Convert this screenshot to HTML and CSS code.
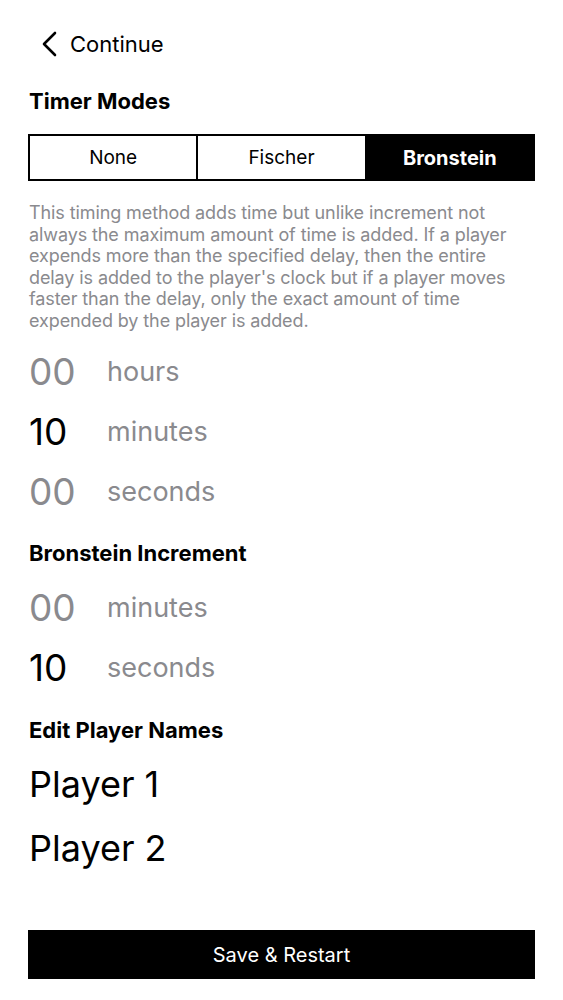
FILE: index.html
```html
<!DOCTYPE html>
<html>
<head>
<meta charset="utf-8">
<link rel="stylesheet" href="styles.css">
</head>
<body>
<div class="page">
  <div class="nav">
    <svg class="chev" width="18" height="26" viewBox="0 0 18 26"><path d="M14 2 L3 13 L14 24" fill="none" stroke="#000" stroke-width="2.6" stroke-linecap="round" stroke-linejoin="round"/></svg>
    <span class="nav-text">Continue</span>
  </div>
  <h2 class="section first">Timer Modes</h2>
  <div class="seg">
    <div class="seg-item">None</div>
    <div class="seg-item">Fischer</div>
    <div class="seg-item active">Bronstein</div>
  </div>
  <p class="desc">This timing method adds time but unlike increment not always the maximum amount of time is added. If a player expends more than the specified delay, then the entire delay is added to the player's clock but if a player moves faster than the delay, only the exact amount of time expended by the player is added.</p>
  <div class="rows r1">
    <div class="row"><span class="num">00</span><span class="unit">hours</span></div>
    <div class="row"><span class="num dark">10</span><span class="unit">minutes</span></div>
    <div class="row"><span class="num">00</span><span class="unit">seconds</span></div>
  </div>
  <h2 class="section">Bronstein Increment</h2>
  <div class="rows r2">
    <div class="row"><span class="num">00</span><span class="unit">minutes</span></div>
    <div class="row"><span class="num dark">10</span><span class="unit">seconds</span></div>
  </div>
  <h2 class="section">Edit Player Names</h2>
  <div class="players">
    <div class="player">Player 1</div>
    <div class="player">Player 2</div>
  </div>
  <div class="btn">Save &amp; Restart</div>
</div>
</body>
</html>
```
FILE: styles.css
```css
* { box-sizing: border-box; }
html, body { margin: 0; padding: 0; background: #fff; }
body { font-family: Inter, "Noto Sans", sans-serif; color: #000; }
.page { width: 563px; height: 1000px; padding: 0 28px; display: flex; flex-direction: column; }
.nav { display: flex; align-items: center; height: 30px; margin-top: 29px; margin-left: 13px; gap: 11px; }
.chev { display: block; }
.nav-text { font-size: 22px; }
.section { margin: 0; font-size: 22px; font-weight: 700; line-height: 26px; padding-left: 1px; }
.section.first { margin-top: 29px; }
.seg { display: flex; margin-top: 20px; height: 47px; border: 2px solid #000; }
.seg-item { flex: 1; display: flex; align-items: center; justify-content: center; font-size: 19px; }
.seg-item + .seg-item { border-left: 2px solid #000; }
.seg-item.active { background: #000; color: #fff; font-weight: 700; font-size: 20px; }
.desc { margin: 21px 0 0 1px; font-size: 18px; line-height: 21.5px; color: #8a8a8e; letter-spacing: -0.1px; }
.rows { display: flex; flex-direction: column; }
.rows.r1 { margin-top: 10px; margin-bottom: 19px; }
.rows.r2 { margin-top: 11px; margin-bottom: 20px; }
.row { display: flex; align-items: center; height: 60px; }
.num { width: 79px; font-size: 37px; font-weight: 400; color: #8a8a8e; padding-left: 1px; }
.num.dark { color: #000; }
.unit { font-size: 27px; color: #8a8a8e; }
.players { display: flex; flex-direction: column; margin-top: 9px; }
.player { height: 64px; display: flex; align-items: center; font-size: 36px; padding-left: 1px; }
.btn { margin-top: auto; margin-bottom: 21px; height: 49px; background: #000; color: #fff; display: flex; align-items: center; justify-content: center; font-size: 20px; }
```
